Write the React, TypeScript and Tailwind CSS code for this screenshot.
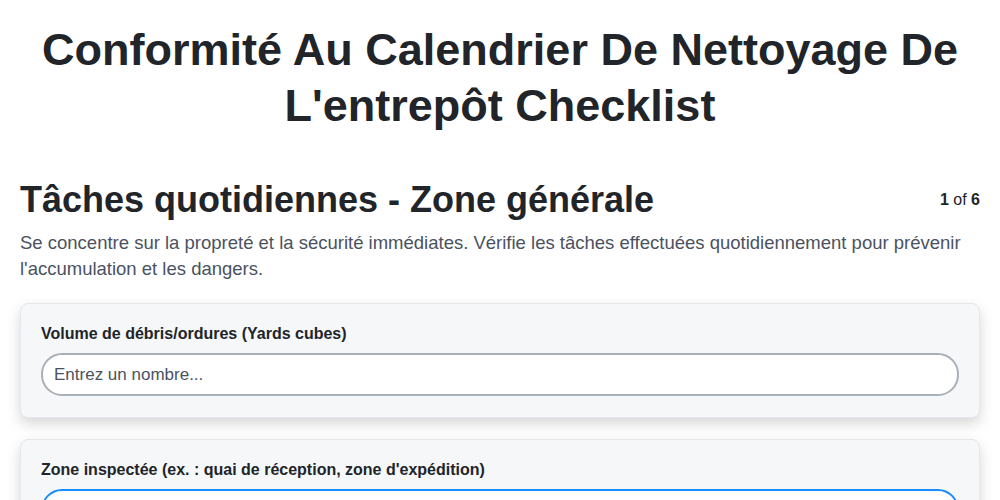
export default function App() {
  return (
    <div className="min-h-screen bg-white px-5 pt-[22px] font-['Liberation_Sans',Arial,sans-serif] text-[#212529]">
      <h1 className="text-center text-[45px] font-bold leading-[56px]">
        Conformité Au Calendrier De Nettoyage De L'entrepôt Checklist
      </h1>

      <div className="mt-[46px] flex items-center justify-between">
        <h2 className="text-4xl font-bold leading-10">Tâches quotidiennes - Zone générale</h2>
        <span className="text-base">
          <span className="font-bold">1</span> of <span className="font-bold">6</span>
        </span>
      </div>
      <p className="mt-2.5 text-[18.5px] leading-[26px] text-[#4a5261]">
        Se concentre sur la propreté et la sécurité immédiates. Vérifie les tâches effectuées quotidiennement pour prévenir
        l'accumulation et les dangers.
      </p>

      <div className="mt-[21px] rounded-lg border border-[#e4e7eb] bg-[#f6f7f9] px-5 pt-5 pb-[21px] shadow-[0_6px_14px_rgba(0,0,0,0.16)]">
        <label className="mb-[10px] block text-base font-bold leading-[19px]">
          Volume de débris/ordures (Yards cubes)
        </label>
        <input
          type="text"
          placeholder="Entrez un nombre..."
          className="h-[43px] w-full rounded-[21px] border-2 border-[#a9b0b8] bg-white px-[11px] text-[17px] text-[#212529] outline-none placeholder:text-[#4a5261]"
        />
      </div>

      <div className="mt-[21px] rounded-lg border border-[#e4e7eb] bg-[#f6f7f9] px-5 pt-5 pb-[21px] shadow-[0_6px_14px_rgba(0,0,0,0.16)]">
        <label className="mb-[10px] block text-base font-bold leading-[19px]">
          Zone inspectée (ex. : quai de réception, zone d'expédition)
        </label>
        <input
          type="text"
          placeholder="Entrez du texte..."
          className="h-[43px] w-full rounded-[21px] border-2 border-[#1a8cff] bg-white px-[11px] text-[17px] text-[#212529] outline-none placeholder:text-[#4a5261]"
        />
      </div>
    </div>
  )
}
